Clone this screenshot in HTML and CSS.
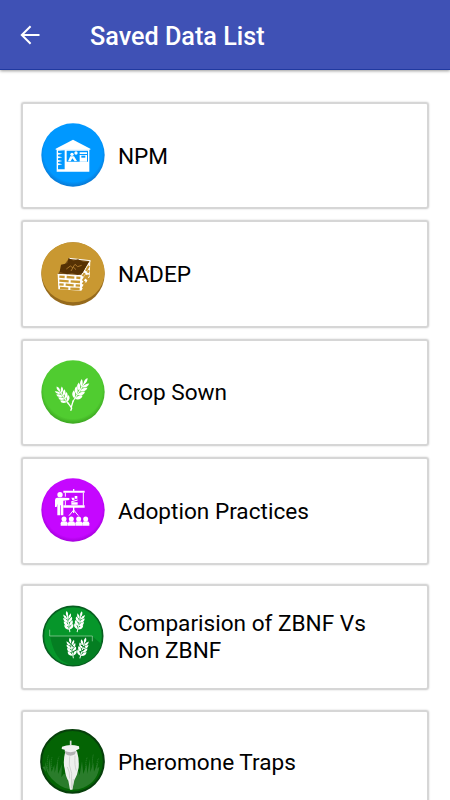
FILE: index.html
```html
<!DOCTYPE html>
<html lang="en">
<head>
  <meta charset="UTF-8" />
  <meta name="viewport" content="width=device-width, initial-scale=1.0"/>
  <title>Saved Data List</title>
  <link rel="stylesheet" href="styles.css">
</head>
<body>
  <svg class="defs" width="0" height="0">
    <defs>
      <g id="ear">
        <path d="M0 34V-30" stroke="#fff" stroke-width="3"/>
        <g id="ear-half" fill="#fff">
          <path d="M1 25Q2 12 14 7Q17 21 1 25zM1 13Q2 0 14 -5Q17 9 1 13zM1 1Q2 -12 14 -17Q16 -3 1 1zM1 -11Q2 -23 12 -29Q14 -15 1 -11z"/>
        </g>
        <use href="#ear-half" transform="scale(-1 1)"/>
        <path d="M0 -20Q-7 -29 0 -39Q7 -29 0 -20z" fill="#fff"/>
      </g>
      <radialGradient id="blue" cy=".46" r=".53"><stop offset=".87" stop-color="#0098ff"/><stop offset="1" stop-color="#087bd8"/></radialGradient>
      <radialGradient id="lime" cy=".46" r=".53"><stop offset=".87" stop-color="#50cc30"/><stop offset="1" stop-color="#3eaa22"/></radialGradient>
      <radialGradient id="violet" cy=".47" r=".53"><stop offset=".87" stop-color="#c507ff"/><stop offset="1" stop-color="#a500dc"/></radialGradient>
    </defs>
  </svg>

  <header class="app-bar">
    <svg class="back" viewBox="0 0 20 20"><path d="M19.5 10H1.8M10.6 1.2L1.8 10l8.8 8.8"/></svg>
    <h1>Saved Data List</h1>
  </header>

  <main class="list">
    <div class="card">
      <svg class="icon" viewBox="33 24 192 192">
        <circle cx="129" cy="120" r="95" fill="url(#blue)"/>
        <path d="M77 101L129 74l52 27v3H77z" fill="#fff"/>
        <path fill="#fff" fill-rule="evenodd" d="M80 103h98v67H80zM84 107v6l13 3-13 3v5l13 3-13 3v5l13 3-13 3v4l13 3-13 3v12h20v-57zM110 107v33h64v-33z"/>
        <g fill="#fff">
          <circle cx="126" cy="118" r="5"/><circle cx="138" cy="114" r="5"/>
          <path d="M114 139l7-15h11l9 14-7 1-7-9-5 9zM149 112h22v5h-22zM149 120h22v20h-22z"/>
        </g>
        <path d="M154 122h12v6h-12z" fill="#0098ff"/>
      </svg>
      <span class="label">NPM</span>
    </div>

    <div class="card">
      <svg class="icon" viewBox="34 24 192 192">
        <circle cx="130" cy="120" r="95" fill="#966a1c"/>
        <ellipse cx="130" cy="115" rx="95" ry="90" fill="#c99831"/>
        <path d="M84 121l34-48 64 7-27 44z" fill="#7a5218"/>
        <path d="M118 73l64 7-27 45-71-4" fill="none" stroke="#fff" stroke-width="3"/>
        <path d="M90 113l4-21 19-4 4-16 14 8 14-4 16 8 16-1-18 33-15 6-17-5-15 4z" fill="#563204"/>
        <path d="M110 105l12-9 7 5 7-10 8 7 12-4M124 111l7-12 8 8" fill="none" stroke="#b88332" stroke-width="2.5"/>
        <path d="M84 121l71 4v45l-69-4zM155 125l27-45-2 48-25 42z" fill="#fff"/>
        <g fill="none" stroke="#c99831" stroke-width="7">
          <path d="M89 128l16 1M111 129l23 2M140 131l12 1M89 140l28 2M123 142l28 2M89 151l13 1M108 152l24 2M138 154l13 1M91 162l25 2M122 164l28 1"/>
          <path stroke-width="6" d="M159 127l6-10M169 111l9-16M159 140l11-18M174 116l4-7M159 151l6-10M169 135l8-13M159 163l10-17M173 139l4-7"/>
        </g>
      </svg>
      <span class="label">NADEP</span>
    </div>

    <div class="card">
      <svg class="icon" viewBox="33 27 192 192">
        <circle cx="129" cy="123" r="95" fill="url(#lime)"/>
        <use href="#ear" transform="translate(99 135) rotate(-34) scale(1.05 .88)"/>
        <use href="#ear" transform="translate(149 119) rotate(32) scale(1.1 1.15)"/>
        <path d="M113 154l12 17-3 8M130 148l-7 23" fill="none" stroke="#fff" stroke-width="4"/>
      </svg>
      <span class="label">Crop Sown</span>
    </div>

    <div class="card">
      <svg class="icon" viewBox="33 22 192 192">
        <circle cx="129" cy="118" r="95" fill="url(#violet)"/>
        <g fill="#fff">
          <circle cx="90" cy="72" r="8"/>
          <path d="M81 81h17l20 1v6l-18 2v44h-7v-30h-2v30h-9v-35l-2 10h-5v-20q0-8 6-8z"/>
          <path d="M100 60h64v6h-64zM129 55h4v7h-4zM100 104h64v7h-64zM129 111h4v16h-4z"/>
          <path d="M124 95h19v7h-19zM124 81h8l2 8h-7zM134 76h8v8h-8z"/>
        </g>
        <path d="M106 66v12M160 66v39M106 90v15M131 118l-14 17M131 118l14 17M123 94l20-6" fill="none" stroke="#fff" stroke-width="3"/>
        <g fill="#fff">
          <g id="person"><circle cx="102" cy="145" r="7.500"/><path d="M92 165v-7q0-6 7-6h6q8 0 8 6v7z"/></g>
          <use href="#person" x="22"/><use href="#person" x="44"/><use href="#person" x="65"/>
        </g>
      </svg>
      <span class="label">Adoption Practices</span>
    </div>

    <div class="card spaced">
      <svg class="icon" viewBox="33 29 192 192">
        <circle cx="129" cy="122" r="89" fill="#06962a" stroke="#075e20" stroke-width="5"/>
        <path d="M60 122h126l29 25q-15 43-54 57-35 13-68-9-23-20-33-73z" fill="#047e22"/>
        <path d="M59 103v19h128v16" fill="none" stroke="#a5d9ae" stroke-width="2"/>
        <use href="#ear" transform="translate(115 81) rotate(-9) scale(.95 .88)"/>
        <use href="#ear" transform="translate(148 81) rotate(13) scale(.95 .88)"/>
        <use href="#ear" transform="translate(125 160) rotate(-10) scale(.95 .86)"/>
        <use href="#ear" transform="translate(158 160) rotate(16) scale(.98 .9)"/>
        <path d="M119 143l13 13M125 171l14-7M152 149l14 8M148 170l15-7" stroke="#047e22" stroke-width="3"/>
      </svg>
      <span class="label">Comparision of ZBNF Vs Non ZBNF</span>
    </div>

    <div class="card spaced">
      <svg class="icon large" viewBox="30 25 195 195">
        <circle cx="127.500" cy="122" r="94" fill="#046404" stroke="#073f0b" stroke-width="6"/>
        <path d="M37 139l11 14-3-30 11 31 1-43 8 42 8-21 1 24 9-35 1 39 12-29-2 39 7-10 38 7 4-22 6 18 7-41 4 38 10-29 2 28 8-45 1 40 9-28 2 27 14-33-5 24 7-6q-4 43-48 63-44 16-81-14-29-22-32-50z" fill="#2a7c2b"/>
        <path d="M54 149q-5-23 1-45M66 142q-5-18 0-32M83 151q-4-25 4-43M168 152q-3-27 4-43M188 150q-3-28 2-49M201 149q-3-22 5-37" fill="none" stroke="#2a7c2b" stroke-width="3" stroke-dasharray="4 2"/>
        <path d="M106 92q-8 32-2 52 3 24 11 36l5 27h7l6-28q9-15 13-38 2-25-5-49z" fill="#eef0ed"/>
        <path d="M119 107q-5 27 6 51l-1 44M135 105q-2 30 4 45M112 139q8 13 7 35M130 175l-4 31" fill="none" stroke="#c3c6c1" stroke-width="2"/>
        <path d="M96 78q24-9 51-1l1 7-9 5-2 11q-14 10-31 0l-2-13-9-2z" fill="#f2f2f2"/>
        <path d="M104 91q18 7 34 0l-3 10q-15 9-28-1z" fill="#b3b3b3"/>
        <path d="M122 60v15" stroke="#ddd" stroke-width="5"/>
      </svg>
      <span class="label">Pheromone Traps</span>
    </div>
  </main>
</body>
</html>
```
FILE: styles.css
```css
html, body {
  margin: 0;
  padding: 0;
  height: 100%;
  background: #fff;
  color: #000;
  font-family: Roboto, sans-serif;
}
body {
  display: flex;
  flex-direction: column;
  overflow: hidden;
}
.defs {
  position: absolute;
}
.app-bar {
  display: flex;
  flex: none;
  align-items: center;
  height: 69px;
  padding-left: 20px;
  gap: 50px;
  background: #3f51b5;
  border-bottom: 1px solid #2039a0;
  box-shadow: 0 1px 3px rgba(0,0,0,0.4);
}
.back {
  width: 20px;
  height: 20px;
  fill: none;
  stroke: #fff;
  stroke-width: 2;
}
h1 {
  margin: 5px 0 0;
  color: #fff;
  font-size: 25.2px;
  font-weight: 500;
  line-height: 30px;
}
.list {
  display: flex;
  flex-direction: column;
  gap: 11px;
  padding: 32px 21px 0;
}
.card {
  display: flex;
  flex: none;
  align-items: center;
  box-sizing: border-box;
  height: 107.4px;
  padding: 0 38px 0 18px;
  gap: 13px;
  border: 2px solid #d6d6d6;
  border-radius: 3px;
  box-shadow: 0 0 2px rgba(0,0,0,0.2);
}
.card.spaced {
  height: 106px;
  margin-top: 8.7px;
}
.icon {
  flex: none;
  width: 64px;
  height: 64px;
  margin-bottom: 1px;
}
.icon.large {
  width: 65px;
  height: 65px;
  margin: 0 0 3px -1px;
}
.label {
  padding-top: 2px;
  font-size: 22.6px;
  line-height: 26.4px;
}
.card:first-child .label {
  padding-top: 3px;
}
.card.spaced .label {
  padding-top: 1px;
}
```
